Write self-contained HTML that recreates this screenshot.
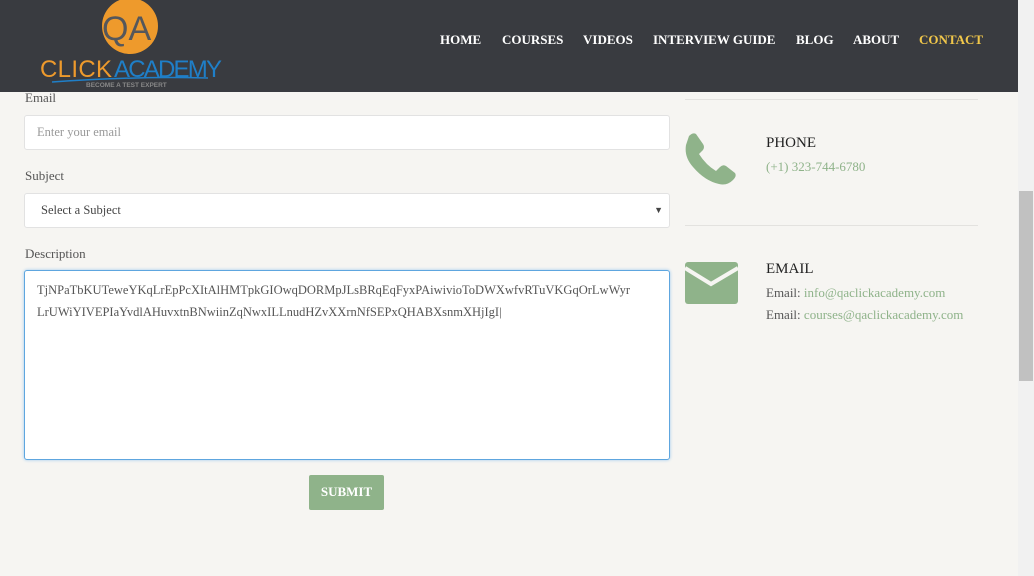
<!DOCTYPE html>
<html><head><style>
*{margin:0;padding:0;box-sizing:border-box}
body{width:1034px;height:576px;overflow:hidden;background:#f6f5f2;font-family:"Liberation Serif",serif;position:relative;color:#555}
.hdr{position:absolute;left:0;top:0;width:1018px;height:92px;background:#393b40}
.nav{position:absolute;top:32px;font-weight:bold;font-size:13px;color:#fff}
.nav span{position:absolute;white-space:nowrap}
.lbl{position:absolute;left:25px;font-size:13px;color:#555}
.inp{position:absolute;left:24px;width:646px;background:#fff;border:1px solid #e2e2e2;border-radius:3px;font-size:12.5px;color:#999;padding-left:12px}
.sb{position:absolute;left:1018px;top:0;width:16px;height:576px;background:#f1f1f1}
.hr{position:absolute;left:685px;width:293px;height:1px;background:#e3e2df}
.g{color:#8fb38a}
</style></head><body>
<div class="hdr">
<svg style="position:absolute;left:38px;top:0" width="190" height="90">
<circle cx="92" cy="26" r="28" fill="#ee9a2c"/>
<text x="64" y="40" font-family="Liberation Sans" font-size="34" fill="#55575b">QA</text>
<text x="2" y="77" font-family="Liberation Sans" font-size="24" fill="#ee9a2c" textLength="72">CLICK</text>
<text x="76" y="77" font-family="Liberation Sans" font-size="24" fill="#1f7fc8" textLength="108">ACADEMY</text>
<path d="M14 82 Q100 76 170 78" stroke="#1f7fc8" stroke-width="1.5" fill="none"/>
<text x="48" y="87" font-family="Liberation Sans" font-size="6.5" font-weight="bold" fill="#888">BECOME A TEST EXPERT</text>
</svg>
<div class="nav">
<span style="left:440px">HOME</span><span style="left:502px">COURSES</span><span style="left:583px">VIDEOS</span><span style="left:653px">INTERVIEW GUIDE</span><span style="left:796px">BLOG</span><span style="left:853px">ABOUT</span><span style="left:919px;color:#f1c74a">CONTACT</span>
</div></div>
<div class="lbl" style="top:90px">Email</div>
<div class="inp" style="top:115px;height:35px;line-height:33px">Enter your email</div>
<div class="lbl" style="top:168px">Subject</div>
<div class="inp" style="top:193px;height:35px;line-height:33px;color:#444;padding-left:16px">Select a Subject<span style="position:absolute;right:6px;font-size:9px">▼</span></div>
<div class="lbl" style="top:246px">Description</div>
<div class="inp" style="top:270px;height:190px;border-color:#5ea6df;color:#555;font-size:12.5px;line-height:22px;padding:8px 12px;box-shadow:0 0 3px #9cc8ee">TjNPaTbKUTeweYKqLrEpPcXItAlHMTpkGIOwqDORMpJLsBRqEqFyxPAiwivioToDWXwfvRTuVKGqOrLwWyr LrUWiYIVEPIaYvdlAHuvxtnBNwiinZqNwxILLnudHZvXXrnNfSEPxQHABXsnmXHjIgI|</div>
<div style="position:absolute;left:309px;top:475px;width:75px;height:35px;background:#8fb38a;color:#fff;font-weight:bold;font-size:13px;text-align:center;line-height:34px;border-radius:2px">SUBMIT</div>
<div class="hr" style="top:99px"></div>
<div class="hr" style="top:225px"></div>
<svg style="position:absolute;left:685px;top:133px" width="52" height="52" viewBox="0 0 52 52"><path d="M1 12 Q-1 24 8 34 Q20 48 34 51 Q42 53 48 47 Q52 43 50 40 L41 33 Q38 31 35 34 L31 38 Q21 32 14 21 L18 17 Q20 14 18 11 L11 1 Q8 -1 4 3 Z" fill="#8fb38a"/></svg>
<svg style="position:absolute;left:685px;top:262px" width="53" height="42"><rect x="0" y="0" width="53" height="42" rx="3" fill="#8fb38a"/><path d="M0 6 L26 22 L53 6" stroke="#f6f5f2" stroke-width="4" fill="none"/></svg>
<div style="position:absolute;left:766px;top:135px;font-size:15px;color:#222">PHONE</div>
<div class="g" style="position:absolute;left:766px;top:159px;font-size:13px">(+1) 323-744-6780</div>
<div style="position:absolute;left:766px;top:261px;font-size:15px;color:#222">EMAIL</div>
<div style="position:absolute;left:766px;top:285px;font-size:13px">Email: <span class="g">info@qaclickacademy.com</span></div>
<div style="position:absolute;left:766px;top:307px;font-size:13px">Email: <span class="g">courses@qaclickacademy.com</span></div>
<div class="sb"><div style="position:absolute;left:1px;top:191px;width:14px;height:190px;background:#c1c1c1"></div></div>
</body></html>
